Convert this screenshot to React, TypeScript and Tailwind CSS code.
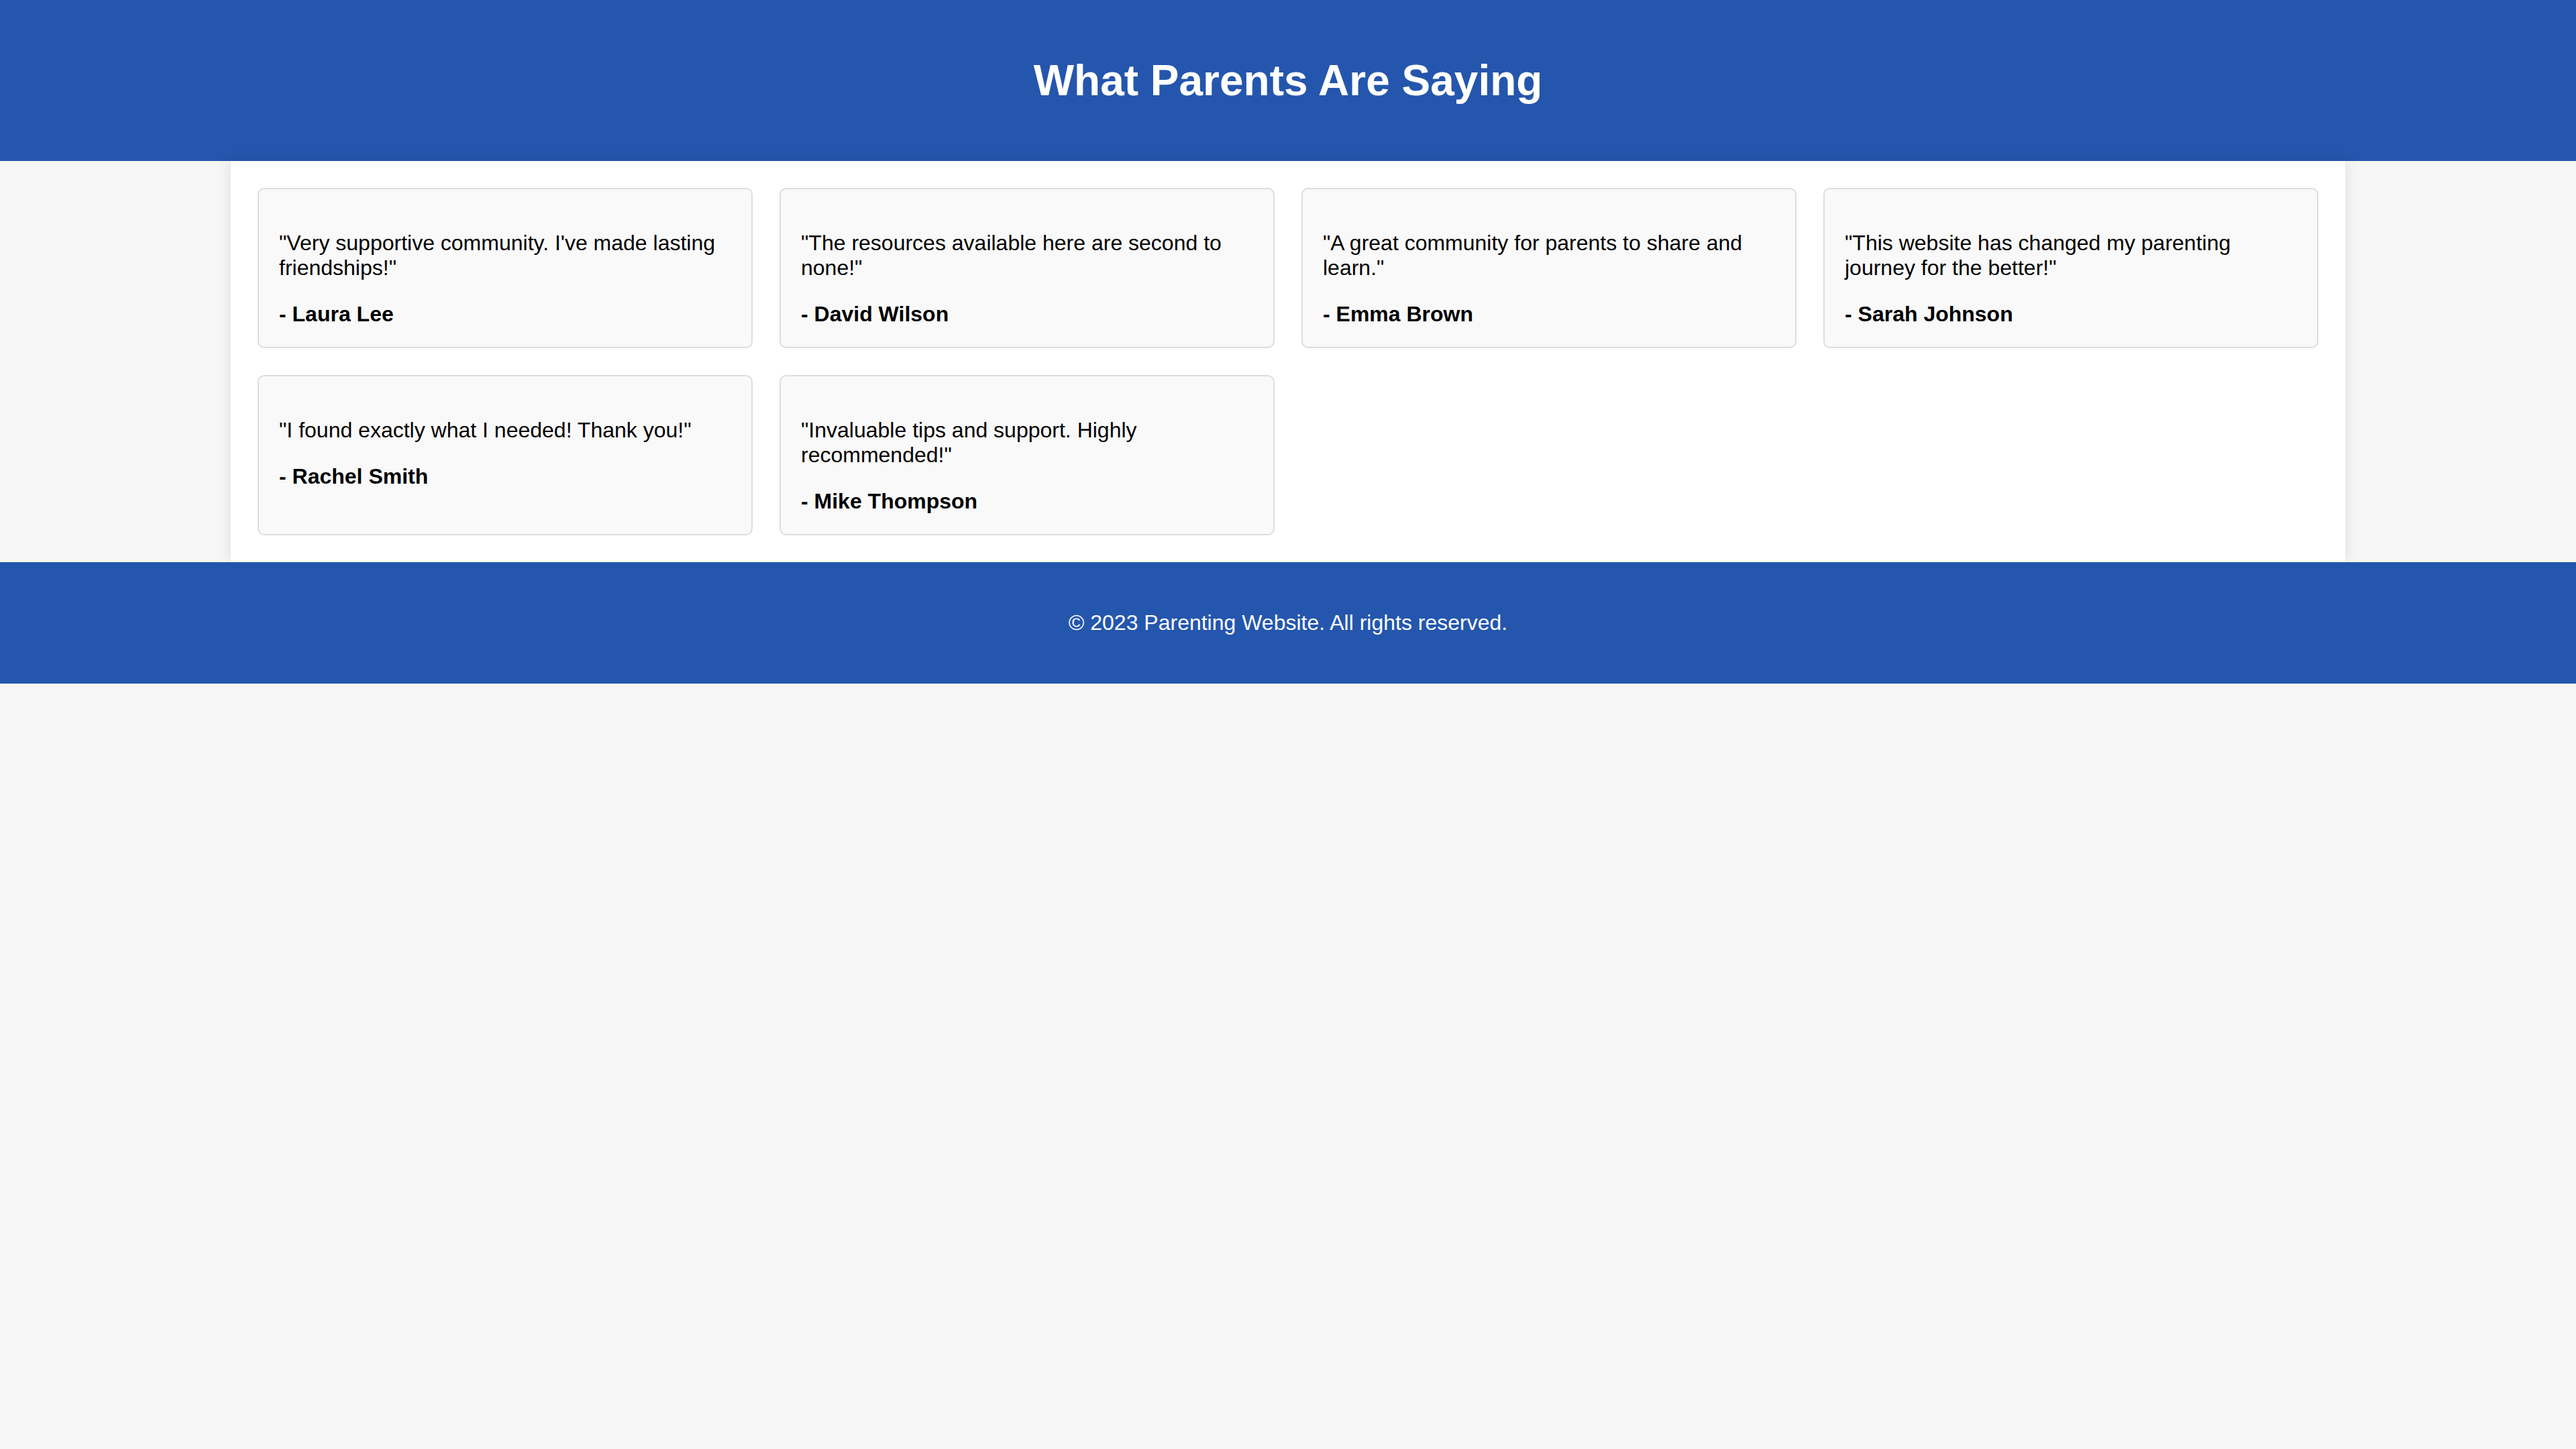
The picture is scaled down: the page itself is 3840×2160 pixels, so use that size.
import React from "react";

const testimonials = [
  { quote: "\"Very supportive community. I've made lasting friendships!\"", author: "- Laura Lee" },
  { quote: "\"The resources available here are second to none!\"", author: "- David Wilson" },
  { quote: "\"A great community for parents to share and learn.\"", author: "- Emma Brown" },
  { quote: "\"This website has changed my parenting journey for the better!\"", author: "- Sarah Johnson" },
  { quote: "\"I found exactly what I needed! Thank you!\"", author: "- Rachel Smith" },
  { quote: "\"Invaluable tips and support. Highly recommended!\"", author: "- Mike Thompson" },
];

export default function App() {
  return (
    <div className="min-h-screen bg-[#f6f6f6] font-['Liberation_Sans',Arial,sans-serif] text-black">
      <header className="bg-[#2456ad] text-white text-center py-[40px]">
        <h1 className="text-[64px] font-bold leading-[74px] my-[43px]">What Parents Are Saying</h1>
      </header>
      <main className="mx-auto w-[3152px] bg-white p-[40px] shadow-[0_0_20px_rgba(0,0,0,0.1)] grid grid-cols-4 gap-[40px]">
        {testimonials.map((t) => (
          <div key={t.author} className="bg-[#f9f9f9] border-2 border-[#dddddd] rounded-[10px] p-[30px]">
            <p className="text-[32px] leading-[37px] my-[32px]">{t.quote}</p>
            <p className="text-[32px] leading-[37px] font-bold mt-[32px] mb-0">{t.author}</p>
          </div>
        ))}
      </main>
      <footer className="bg-[#2456ad] text-white text-center py-[40px]">
        <p className="text-[32px] leading-[37px] my-[32px]">© 2023 Parenting Website. All rights reserved.</p>
      </footer>
    </div>
  );
}
